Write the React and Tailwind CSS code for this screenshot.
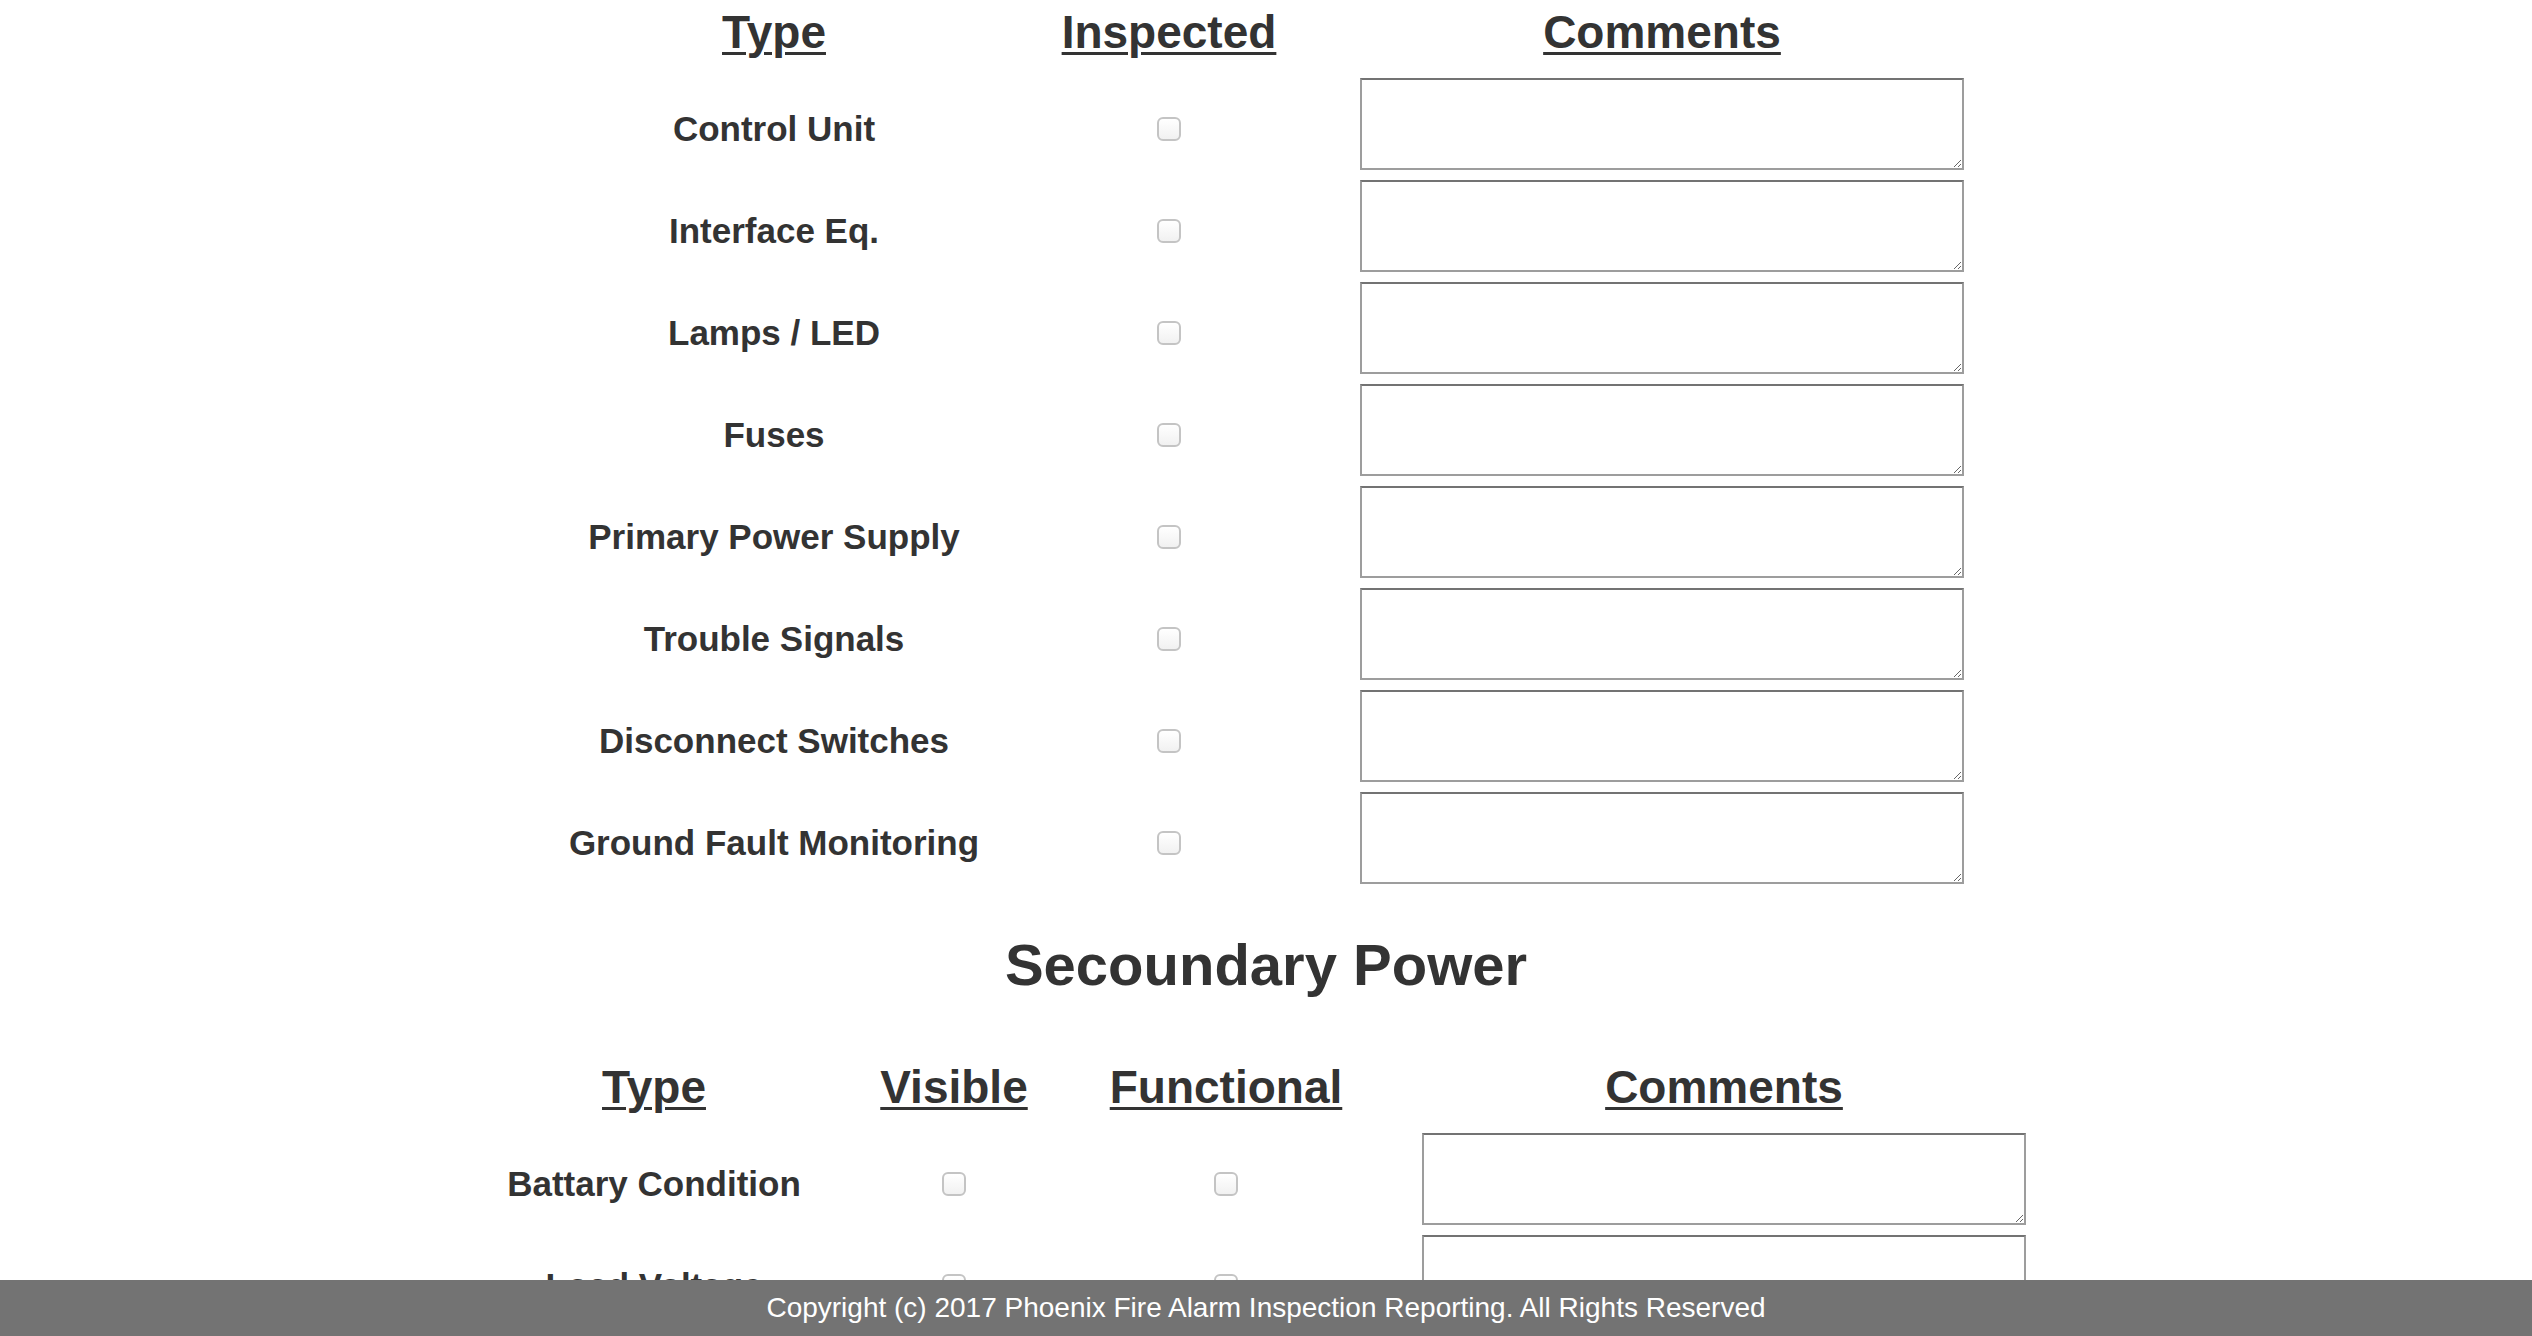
import React from 'react';

const primaryItems = [
  'Control Unit',
  'Interface Eq.',
  'Lamps / LED',
  'Fuses',
  'Primary Power Supply',
  'Trouble Signals',
  'Disconnect Switches',
  'Ground Fault Monitoring',
];

const secondaryItems = ['Battary Condition', 'Load Voltage', 'Charger Test', 'Discharge Test'];

function Heading({ children }) {
  return (
    <span className="text-[46px] leading-[53px] font-bold underline decoration-[3px] underline-offset-[4px]">
      {children}
    </span>
  );
}

function Check() {
  return (
    <input
      type="checkbox"
      className="appearance-none mt-[10px] w-[24px] h-[24px] rounded-[6px] border-2 border-[#c4c4c4] bg-gradient-to-b from-white to-[#f1f1f1]"
    />
  );
}

function Comment() {
  return (
    <textarea className="block ml-[10px] w-[604px] h-[92px] border-2 border-[#9d9d9d] border-t-[#737373] bg-white outline-none" />
  );
}

export default function App() {
  return (
    <div className="min-h-screen bg-white text-[#333] font-['Liberation_Sans',Arial,sans-serif] pb-[120px]">
      {/* PRIMARY POWER TABLE */}
      <div className="ml-[560px] grid grid-cols-[428px_362px_614px]">
        <div className="h-[78px] pt-[6px] text-center"><Heading>Type</Heading></div>
        <div className="h-[78px] pt-[6px] text-center"><Heading>Inspected</Heading></div>
        <div className="h-[78px] pt-[6px] pl-[10px] text-center"><Heading>Comments</Heading></div>

        {primaryItems.map((item) => (
          <React.Fragment key={item}>
            <div className="h-[102px] pb-[10px] flex items-center justify-center">
              <span className="mt-[8px] text-[35px] leading-none font-bold">{item}</span>
            </div>
            <div className="h-[102px] pb-[10px] flex items-center justify-center">
              <Check />
            </div>
            <div className="h-[102px]">
              <Comment />
            </div>
          </React.Fragment>
        ))}
      </div>

      {/* SECONDARY POWER */}
      <h2 className="mt-[39px] text-center text-[58px] leading-[64px] font-bold">Secoundary Power</h2>

      <div className="mt-[64px] ml-[440px] grid grid-cols-[428px_172px_372px_614px]">
        <div className="h-[72px] text-center"><Heading>Type</Heading></div>
        <div className="h-[72px] text-center"><Heading>Visible</Heading></div>
        <div className="h-[72px] text-center"><Heading>Functional</Heading></div>
        <div className="h-[72px] pl-[10px] text-center"><Heading>Comments</Heading></div>

        {secondaryItems.map((item) => (
          <React.Fragment key={item}>
            <div className="h-[102px] pb-[10px] flex items-center justify-center">
              <span className="mt-[8px] text-[35px] leading-none font-bold">{item}</span>
            </div>
            <div className="h-[102px] pb-[10px] flex items-center justify-center">
              <Check />
            </div>
            <div className="h-[102px] pb-[10px] flex items-center justify-center">
              <Check />
            </div>
            <div className="h-[102px]">
              <Comment />
            </div>
          </React.Fragment>
        ))}
      </div>

      {/* FOOTER */}
      <footer className="fixed bottom-0 left-0 right-0 h-[56px] bg-[#737373] flex items-center justify-center">
        <p className="text-white text-[28px] leading-none">
          Copyright (c) 2017 Phoenix Fire Alarm Inspection Reporting. All Rights Reserved
        </p>
      </footer>
    </div>
  );
}
